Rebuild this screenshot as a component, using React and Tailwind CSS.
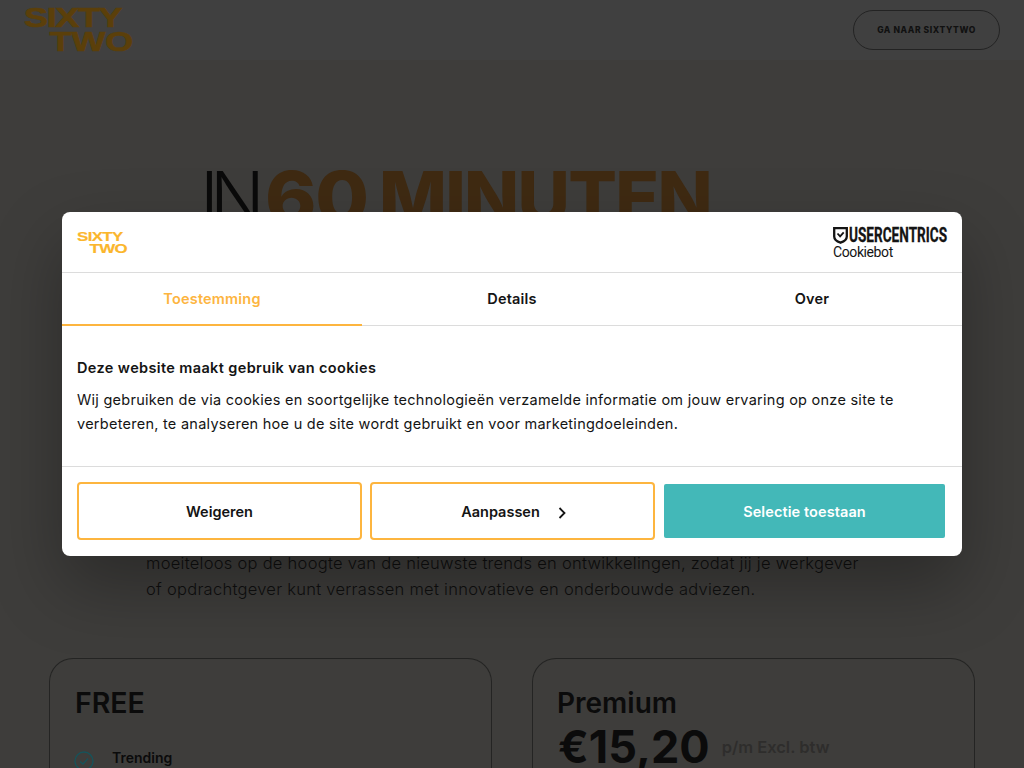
import React from "react";

function Logo({ big }) {
  return big ? (
    <div className="flex flex-col font-['Liberation_Sans',sans-serif] font-bold text-[#5b3f0a] text-[28px] leading-[24px] tracking-[-1px] origin-top-left scale-x-[1.28] w-[80px] [-webkit-text-stroke:0.7px_#5b3f0a]">
      <span>SIXTY</span>
      <span className="pl-[20px] tracking-[0px]">TWO</span>
    </div>
  ) : (
    <div className="flex flex-col font-['Liberation_Sans',sans-serif] font-bold text-[#fbb62c] text-[13.5px] leading-[11.5px] tracking-[-0.5px] origin-top-left scale-x-[1.25] w-[42px] [-webkit-text-stroke:0.2px_#fbb62c]">
      <span>SIXTY</span>
      <span className="pl-[10px]">TWO</span>
    </div>
  );
}

function Shield() {
  return (
    <svg width="15" height="17" viewBox="0 0 15 17" fill="none" className="shrink-0">
      <path d="M1.2 1.2h12.6v8.3c0 3-2.8 5-6.3 6.2C4 14.5 1.2 12.5 1.2 9.5z" stroke="#141414" strokeWidth="2.3" />
      <path d="M4.5 6.5l2.6 2.8 3.6-4" stroke="#141414" strokeWidth="1.8" />
    </svg>
  );
}

function Card({ children }) {
  return (
    <div className="border border-[#242423] rounded-t-[24px] border-b-0 px-[25px] pt-[24px] h-[110px] w-[443px] overflow-hidden">
      {children}
    </div>
  );
}

export default function App() {
  return (
    <div className="relative h-screen w-full overflow-hidden bg-[#3e3d3b] font-['Inter',sans-serif]">
      <header className="h-[60px] bg-[#404040] flex items-start justify-between pl-[24px] pr-[24px]">
        <div className="pt-[6px]"><Logo big /></div>
        <div className="mt-[10px] w-[147px] h-[40px] rounded-full border border-[#232323] flex items-center justify-center text-[8.5px] font-extrabold tracking-[0.6px] text-[#111111]">
          GA NAAR SIXTYTWO
        </div>
      </header>

      <main>
        <h1 className="pl-[200px] pt-[112px] h-[498px] flex items-start text-[72px] leading-[50px] whitespace-nowrap">
          <span className="font-light text-[#0a0a0a] tracking-[-9px] w-[65px]">IN</span>
          <span className="font-extrabold text-[#3f2a12] tracking-[-1px] w-[114px] origin-left scale-x-[1.08]">60</span>
          <span className="font-extrabold text-[#3f2a12] tracking-[-1.7px]">MINUTEN</span>
        </h1>
        <p className="pl-[146px] mt-[-8px] w-[880px] text-[16.5px] leading-[26px] tracking-[0.27px] text-[#0f0f0f] font-light whitespace-nowrap">
          moeiteloos op de hoogte van de nieuwste trends en ontwikkelingen, zodat jij je werkgever<br />
          of opdrachtgever kunt verrassen met innovatieve en onderbouwde adviezen.
        </p>
        <div className="flex justify-between pl-[49px] pr-[49px] mt-[56px]">
          <Card>
            <div className="text-[28.5px] leading-[40px] font-semibold text-[#0b0b0b]">FREE</div>
            <div className="flex items-center gap-[18px] mt-[25px] text-[14px] font-semibold text-[#0b0b0b]">
              <svg width="20" height="20" viewBox="0 0 20 20" fill="none" className="mt-[3px] -ml-[1px]">
                <circle cx="10" cy="10" r="9" stroke="#17535a" strokeWidth="1.4" />
                <path d="M6 10.5l3 2.5 5-5.5" stroke="#17535a" strokeWidth="1.4" />
              </svg>
              <span className="-mt-[4px]">Trending</span>
            </div>
          </Card>
          <Card>
            <div className="text-[28px] leading-[40px] font-semibold text-[#0b0b0b] -ml-[1px]">Premium</div>
            <div className="flex items-center gap-[12px] -mt-[1px] h-[50px]">
              <span className="text-[45px] leading-[50px] font-bold text-[#0b0b0b]">€15,20</span>
              <span className="text-[16.5px] font-semibold text-[#2e2d2c]">p/m Excl. btw</span>
            </div>
          </Card>
        </div>
      </main>

      <div className="absolute left-[62px] top-[212px] w-[900px] h-[344px] bg-white rounded-[8px] flex flex-col shadow-[0_30px_70px_rgba(0,0,0,0.3)]">
        <div className="h-[61px] border-b border-[#dcdcdc] flex items-start justify-between pl-[15px] pr-[15px]">
          <div className="pt-[19px]"><Logo /></div>
          <div className="pt-[14px] w-[114px]">
            <div className="flex items-center gap-[1px] h-[18px]">
              <Shield />
              <span className="font-['Roboto',sans-serif] font-bold text-[20px] leading-[18px] text-[#141414] origin-left scale-x-[0.68] whitespace-nowrap [-webkit-text-stroke:0.3px_#141414]">USERCENTRICS</span>
            </div>
            <div className="font-['Roboto',sans-serif] text-[14px] leading-[16px] text-[#141414] tracking-[-0.4px]">Cookiebot</div>
          </div>
        </div>
        <div className="h-[53px] border-b border-[#dcdcdc] grid grid-cols-3 text-[14.5px] font-semibold text-[#141414] tracking-[0.2px]">
          <div className="flex items-center justify-center text-[#fdb53f] border-b-2 border-[#fdb53f] h-[53px]">Toestemming</div>
          <div className="flex items-center justify-center pb-[2px]">Details</div>
          <div className="flex items-center justify-center pb-[2px]">Over</div>
        </div>
        <div className="h-[141px] border-b border-[#dcdcdc] px-[15px] pt-[32px] text-[#141414]">
          <div className="text-[14.5px] leading-[20px] font-semibold tracking-[0.37px]">Deze website maakt gebruik van cookies</div>
          <p className="text-[14.5px] leading-[24px] mt-[10px] tracking-[0.26px] whitespace-nowrap">
            Wij gebruiken de via cookies en soortgelijke technologieën verzamelde informatie om jouw ervaring op onze site te<br />
            verbeteren, te analyseren hoe u de site wordt gebruikt en voor marketingdoeleinden.
          </p>
        </div>
        <div className="flex items-center pl-[15px] pt-[15px] text-[14.5px] font-semibold text-[#141414]">
          <div className="w-[285px] h-[58px] border-2 border-[#fdb53f] rounded-[4px] flex items-center justify-center pt-[1px]">Weigeren</div>
          <div className="ml-[8px] w-[285px] h-[58px] border-2 border-[#fdb53f] rounded-[4px] flex items-center justify-center gap-[18px] pt-[1px] pl-[2px]">
            <span>Aanpassen</span>
            <svg width="8" height="12" viewBox="0 0 8 12" fill="none" className="mt-[2px]">
              <path d="M1.5 1l5 5-5 5" stroke="#141414" strokeWidth="1.8" />
            </svg>
          </div>
          <div className="ml-[9px] w-[281px] h-[54px] bg-[#43b8b8] rounded-[2px] flex items-center justify-center text-white pt-[1px] tracking-[0.1px]">Selectie toestaan</div>
        </div>
      </div>
    </div>
  );
}
